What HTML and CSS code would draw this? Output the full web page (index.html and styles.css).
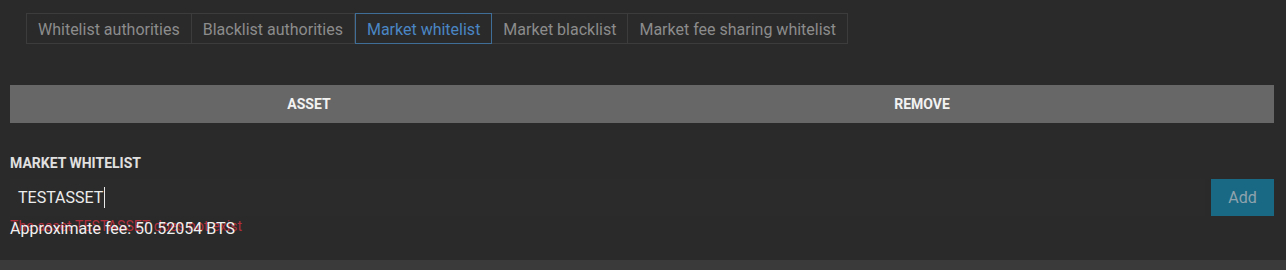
FILE: index.html
```html
<!DOCTYPE html>
<html>
<head>
<meta charset="utf-8">
<link rel="stylesheet" href="styles.css">
</head>
<body>
<div class="page">
  <div class="tabs">
    <div class="tab">Whitelist authorities</div>
    <div class="tab">Blacklist authorities</div>
    <div class="tab active">Market whitelist</div>
    <div class="tab">Market blacklist</div>
    <div class="tab">Market fee sharing whitelist</div>
  </div>
  <div class="table-head">
    <div class="th">ASSET</div>
    <div class="th">REMOVE</div>
    <div></div>
  </div>
  <div class="label">MARKET WHITELIST</div>
  <div class="input-row">
    <div class="input"><span class="value">TESTASSET</span><span class="caret"></span></div>
    <button class="add">Add</button>
  </div>
  <div class="messages">
    <div class="error">The asset TESTASSET does not exist</div>
    <div class="fee">Approximate fee: 50.52054 BTS</div>
  </div>
</div>
<div class="footer"></div>
</body>
</html>
```
FILE: styles.css
```css
html, body {
  margin: 0;
  padding: 0;
  background: #2a2a2a;
  font-family: Roboto, "Liberation Sans", sans-serif;
  height: 270px;
  overflow: hidden;
}
.page {
  height: 260px;
  padding: 0 12px 0 10px;
  box-sizing: border-box;
}
.tabs {
  display: flex;
  padding: 13px 0 0 16px;
}
.tab {
  height: 31px;
  line-height: 31px;
  padding: 0 11px;
  border: 1px solid #3c3c3c;
  border-left: none;
  box-sizing: border-box;
  color: #8c8c8c;
  font-size: 16px;
  white-space: nowrap;
}
.tab:first-child {
  border-left: 1px solid #3c3c3c;
}
.tab.active {
  border: 1px solid #3f6f98;
  color: #4a86c4;
}
.table-head {
  margin-top: 41px;
  height: 38px;
  background: #676767;
  display: grid;
  grid-template-columns: 598px 628px 1fr;
  align-items: center;
}
.th {
  text-align: center;
  color: #f2f2f2;
  font-weight: bold;
  font-size: 14px;
}
.label {
  margin-top: 32px;
  color: #e0e0e0;
  font-weight: bold;
  font-size: 14px;
  line-height: 16px;
}
.input-row {
  margin-top: 8px;
  display: flex;
  gap: 6px;
  height: 37px;
}
.input {
  flex: 1;
  display: flex;
  align-items: center;
  padding-left: 8px;
  background: #2b2b2b;
  color: #ececec;
  font-size: 16px;
}
.caret {
  display: inline-block;
  width: 1px;
  height: 21px;
  background: #e8e8e8;
  margin-left: 1px;
}
.add {
  width: 63px;
  height: 37px;
  border: none;
  background: #1a6984;
  color: #8ea3ad;
  font-family: Roboto, "Liberation Sans", sans-serif;
  font-size: 16px;
  padding: 0;
}
.messages {
  position: relative;
  height: 30px;
}
.error {
  position: absolute;
  left: 0;
  top: 2px;
  color: #c0303e;
  font-size: 14px;
  opacity: 0.9;
  letter-spacing: 0.08px;
}
.fee {
  position: absolute;
  left: 0;
  top: 3px;
  color: #f0f0f0;
  font-size: 16px;
}
.footer {
  height: 10px;
  background: #3a3a3a;
}
```
